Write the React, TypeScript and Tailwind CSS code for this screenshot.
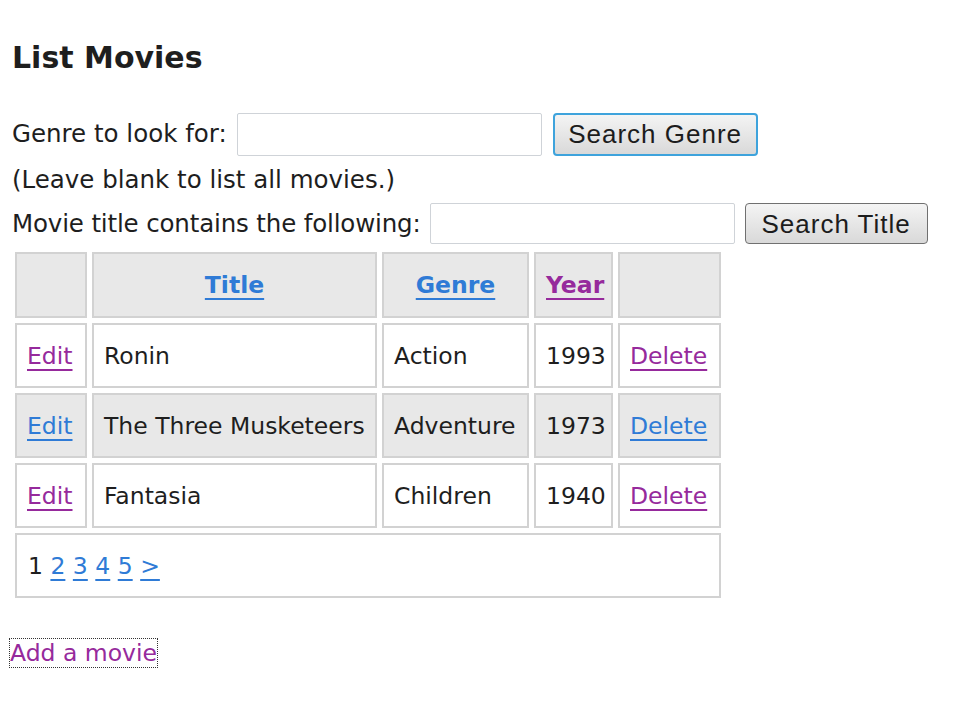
import React from 'react';

interface Movie {
  title: string;
  genre: string;
  year: number;
  visited: boolean;
}

const movies: Movie[] = [
  { title: 'Ronin', genre: 'Action', year: 1993, visited: true },
  { title: 'The Three Musketeers', genre: 'Adventure', year: 1973, visited: false },
  { title: 'Fantasia', genre: 'Children', year: 1940, visited: true },
];

const blue = 'text-[#2f7bd6] underline underline-offset-[5px] decoration-2';
const purple = 'text-[#962a9c] underline underline-offset-[5px] decoration-2';

const cell = 'border-2 border-[#d2d2d2] px-[10px] h-[65px]';
const btn =
  "rounded-[4px] bg-gradient-to-b from-[#f4f4f4] to-[#d9d9d9] font-['Liberation_Sans',Arial,sans-serif] text-[26px] tracking-[1px] text-[#1c1c1c]";

export default function App() {
  return (
    <div className="min-h-[716px] bg-white text-[#1e1e1e] font-['DejaVu_Sans',sans-serif] text-[23.5px] leading-[30px]">
      <div className="pt-[36px] px-[12px] text-[24.5px]">
        <h2 className="text-[30px] leading-[44px] font-bold">List Movies</h2>

        {/* Search by genre */}
        <div className="mt-[32px] flex items-center h-[44px]">
          <span>Genre to look for:</span>
          <input className="ml-[10px] w-[305px] h-[43px] border border-[#cfd3d8] rounded-[2px] bg-white" />
          <button className={`${btn} ml-[11px] w-[205px] h-[43px] border-2 border-[#3ea3dc]`}>
            Search Genre
          </button>
        </div>
        <div className="mt-[9px]">(Leave blank to list all movies.)</div>

        {/* Search by title */}
        <div className="mt-[8px] flex items-center h-[41px]">
          <span className="tracking-[-0.15px]">Movie title contains the following:</span>
          <input className="ml-[9px] w-[305px] h-[41px] border border-[#cfd3d8] rounded-[2px] bg-white" />
          <button className={`${btn} ml-[10px] w-[183px] h-[41px] border border-[#707070]`}>
            Search Title
          </button>
        </div>
      </div>

      <table className="ml-[10px] mt-[3px] w-[715px] table-fixed border-separate border-spacing-[5px]">
        <thead>
          <tr className="bg-[#e8e8e8]">
            <th className={`${cell} w-[72px] h-[66px]`} />
            <th className={`${cell} w-[285px] h-[66px] font-bold`}>
              <a href="#" className={blue}>Title</a>
            </th>
            <th className={`${cell} w-[147px] h-[66px] font-bold`}>
              <a href="#" className={blue}>Genre</a>
            </th>
            <th className={`${cell} w-[79px] h-[66px] px-[2px] font-bold`}>
              <a href="#" className={purple}>Year</a>
            </th>
            <th className={`${cell} w-[103px] h-[66px]`} />
          </tr>
        </thead>
        <tbody>
          {movies.map((m, i) => (
            <tr key={m.title} className={i % 2 === 1 ? 'bg-[#e8e8e8]' : 'bg-white'}>
              <td className={cell}>
                <a href="#" className={m.visited ? purple : blue}>Edit</a>
              </td>
              <td className={`${cell} whitespace-nowrap`}>{m.title}</td>
              <td className={cell}>{m.genre}</td>
              <td className={`${cell} px-[2px] text-center`}>{m.year}</td>
              <td className={`${cell} px-[8px]`}>
                <a href="#" className={m.visited ? purple : blue}>Delete</a>
              </td>
            </tr>
          ))}
          <tr>
            <td colSpan={5} className={`${cell} px-[11px]`}>
              <span>1 </span>
              {['2', '3', '4', '5', '>'].map((p, i) => (
                <React.Fragment key={p}>
                  <a href="#" className={blue}>{p}</a>
                  {i < 4 ? ' ' : ''}
                </React.Fragment>
              ))}
            </td>
          </tr>
        </tbody>
      </table>

      <div className="px-[10px] mt-[35px]">
        <a href="#" className="text-[#962a9c] outline-1 outline-dotted outline-[#333] leading-[28px]">
          Add a movie
        </a>
      </div>
    </div>
  );
}
